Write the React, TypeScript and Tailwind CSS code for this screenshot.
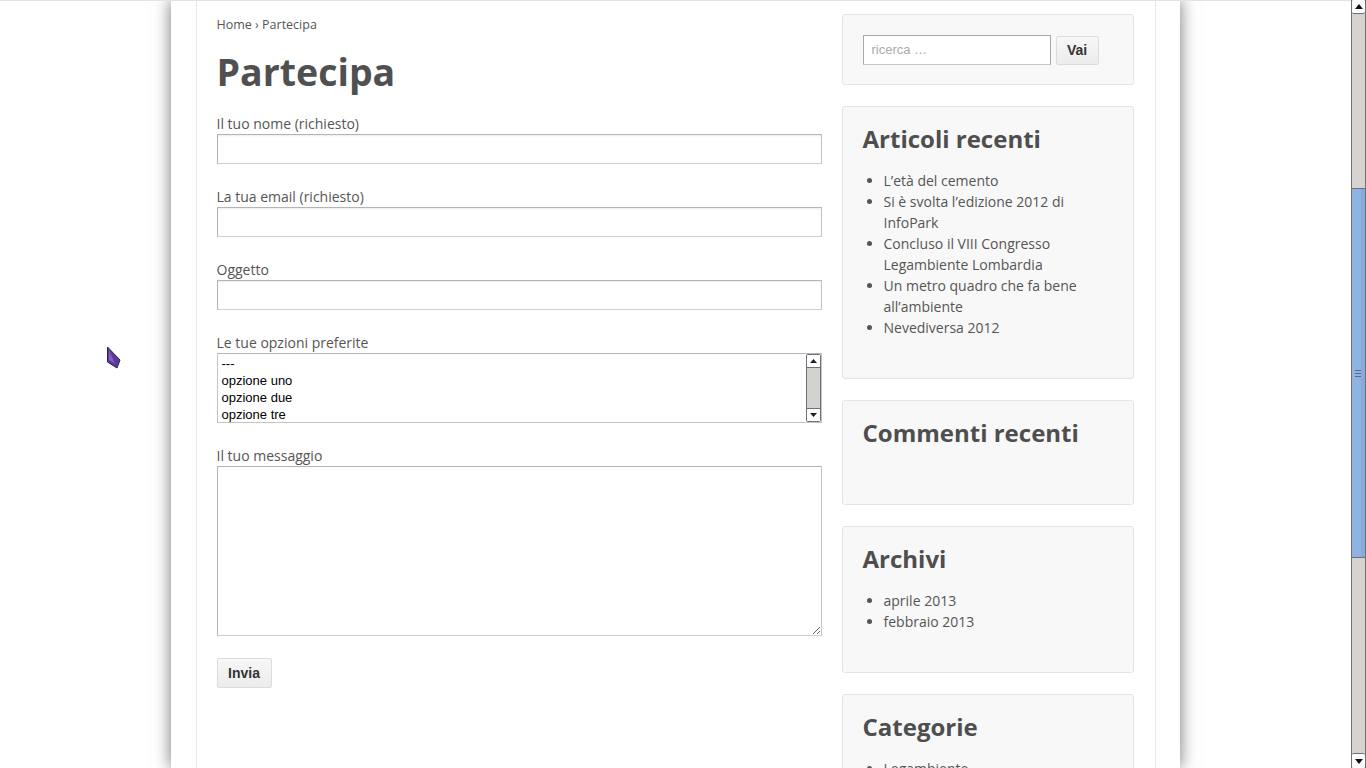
import React from "react";

const OS = { fontFamily: '"Open Sans", "Liberation Sans", sans-serif' };
const AR = { fontFamily: '"Liberation Sans", Arial, sans-serif' };

function Field({ label, children }: { label: string; children: React.ReactNode }) {
  return (
    <div className="mb-[22px]">
      <div className="h-[21px] text-[14px] leading-[21px] text-[#555]">{label}</div>
      {children}
    </div>
  );
}

function TextInput() {
  return (
    <div className="h-[30px] w-full border border-[#b4b4b4] border-b-[#cfcfcf] border-r-[#c4c4c4] bg-white shadow-[inset_0_1px_2px_rgba(0,0,0,0.08)]" />
  );
}

function ListBox() {
  const items = ["---", "opzione uno", "opzione due", "opzione tre"];
  return (
    <div className="flex h-[70px] w-full border border-[#c4c4c4] border-t-[#b4b4b4] bg-white">
      <div className="flex-1 overflow-hidden pl-[4px] pt-[1px] text-[13px] leading-[17px] text-black" style={AR}>
        {items.map((t) => (
          <div key={t}>{t}</div>
        ))}
      </div>
      <div className="flex w-[15px] flex-col overflow-hidden rounded-[2px] border border-[#6d7079]">
        <div className="flex h-[13px] items-center justify-center border-b border-[#6d7079] bg-white">
          <svg width="7" height="4" viewBox="0 0 7 4"><polygon points="0,4 7,4 3.5,0" fill="#222" /></svg>
        </div>
        <div className="flex-1 bg-[#d4d2cf]" />
        <div className="flex h-[13px] items-center justify-center border-t border-[#6d7079] bg-white">
          <svg width="7" height="4" viewBox="0 0 7 4"><polygon points="0,0 7,0 3.5,4" fill="#222" /></svg>
        </div>
      </div>
    </div>
  );
}

function Widget({ title, items }: { title: string; items: string[] }) {
  return (
    <div className="mb-[21px] flex flex-col rounded-[3px] border border-[#e4e4e4] bg-[#f8f8f8] px-[20px] pt-[20px] pb-[20px]">
      <h3 className="mb-[19px] text-[24px] font-bold leading-[24px] text-[#4e4e4e]">{title}</h3>
      <ul className="mb-[20px] list-disc pl-[21px] text-[14px] leading-[21px] text-[#555] marker:text-[#555]">
        {items.map((t) => (
          <li key={t}>{t}</li>
        ))}
      </ul>
    </div>
  );
}

function PageScrollbar() {
  return (
    <div className="flex h-[768px] w-[15px] flex-col border-x border-[#6c6f78] bg-[#d6d3d0]">
      <div className="flex h-[14px] items-center justify-center rounded-[2px] border-b border-[#6c6f78] bg-white">
        <svg width="8" height="5" viewBox="0 0 8 5"><polygon points="0,5 8,5 4,0" fill="#111" /></svg>
      </div>
      <div className="h-[174px]" />
      <div className="relative h-[370px] border-y border-[#6c6f78] bg-[#8fb3e3]">
        <div className="absolute right-0 top-0 h-full w-[4px] bg-[#87aadb]" />
        <div className="absolute left-[3px] top-[181px] flex w-[6px] flex-col gap-[2px]">
          <div className="h-px bg-[#5a6b85]" />
          <div className="h-px bg-[#5a6b85]" />
          <div className="h-px bg-[#5a6b85]" />
        </div>
      </div>
      <div className="flex-1" />
      <div className="flex h-[15px] items-center justify-center rounded-[2px] border-t border-[#6c6f78] bg-white">
        <svg width="8" height="5" viewBox="0 0 8 5"><polygon points="0,0 8,0 4,5" fill="#111" /></svg>
      </div>
    </div>
  );
}

export default function App() {
  return (
    <div className="flex h-[768px] w-[1366px] overflow-hidden bg-white" style={OS}>
      <div className="relative h-[768px] w-[1351px] overflow-hidden">
        <div className="mx-auto h-[768px] w-[1009px] bg-white shadow-[0_0_16px_rgba(0,0,0,0.55)]">
          <div className="mx-auto flex h-full w-[960px] border-x border-[#e6e6e6] bg-white">
            {/* main column */}
            <div className="w-[625px] pl-[20px] pt-[14px]">
              <div className="mt-[1px] h-[20px] text-[12.5px] leading-[20px] text-[#555]">Home › Partecipa</div>
              <h1 className="mt-[15px] mb-[20px] text-[37.5px] font-bold leading-[43px] text-[#505050]">Partecipa</h1>
              <Field label="Il tuo nome (richiesto)">
                <TextInput />
              </Field>
              <Field label="La tua email (richiesto)">
                <TextInput />
              </Field>
              <Field label="Oggetto">
                <TextInput />
              </Field>
              <Field label="Le tue opzioni preferite">
                <ListBox />
              </Field>
              <Field label="Il tuo messaggio">
                <textarea
                  readOnly
                  className="block h-[170px] w-full resize border border-[#b4b4b4] border-b-[#cfcfcf] border-r-[#c4c4c4] bg-white outline-none"
                />
              </Field>
              <button
                className="h-[30px] w-[55px] rounded-[2px] border border-[#dcdcdc] bg-gradient-to-b from-[#f7f7f7] to-[#ececec] text-[14px] font-bold text-[#333]"
                style={AR}
              >
                Invia
              </button>
            </div>
            {/* sidebar */}
            <div className="ml-[20px] w-[292px] pt-[14px]">
              <div className="mb-[21px] flex items-center gap-[5px] rounded-[3px] border border-[#e4e4e4] bg-[#f8f8f8] px-[20px] pt-[20px] pb-[19px]">
                <div
                  className="flex h-[30px] w-[188px] items-center border border-[#a9a9a9] border-b-[#c8c8c8] bg-white pl-[8px] text-[13px] text-[#aaa]"
                  style={AR}
                >
                  ricerca …
                </div>
                <button
                  className="h-[29px] w-[43px] rounded-[2px] border border-[#dcdcdc] bg-gradient-to-b from-[#f7f7f7] to-[#ececec] text-[14px] font-bold text-[#333]"
                  style={AR}
                >
                  Vai
                </button>
              </div>
              <Widget
                title="Articoli recenti"
                items={[
                  "L’età del cemento",
                  "Si è svolta l’edizione 2012 di InfoPark",
                  "Concluso il VIII Congresso Legambiente Lombardia",
                  "Un metro quadro che fa bene all’ambiente",
                  "Nevediversa 2012",
                ]}
              />
              <Widget title="Commenti recenti" items={[]} />
              <Widget title="Archivi" items={["aprile 2013", "febbraio 2013"]} />
              <Widget title="Categorie" items={["Legambiente", "InfoPark"]} />
            </div>
          </div>
        </div>
        {/* top line */}
        <div className="absolute left-0 top-0 h-px w-full bg-[#e3e3e3]" />
        {/* mouse cursor */}
        <svg className="absolute left-[106px] top-[346px]" width="16" height="24" viewBox="0 0 16 24">
          <polygon points="1.5,1 1.5,16 11,22 14,14" fill="#5b3a9a" stroke="#2e1c55" strokeWidth="1" />
          <polygon points="3,4 3,14 9,18" fill="#7f5fc4" />
        </svg>
      </div>
      <PageScrollbar />
    </div>
  );
}
